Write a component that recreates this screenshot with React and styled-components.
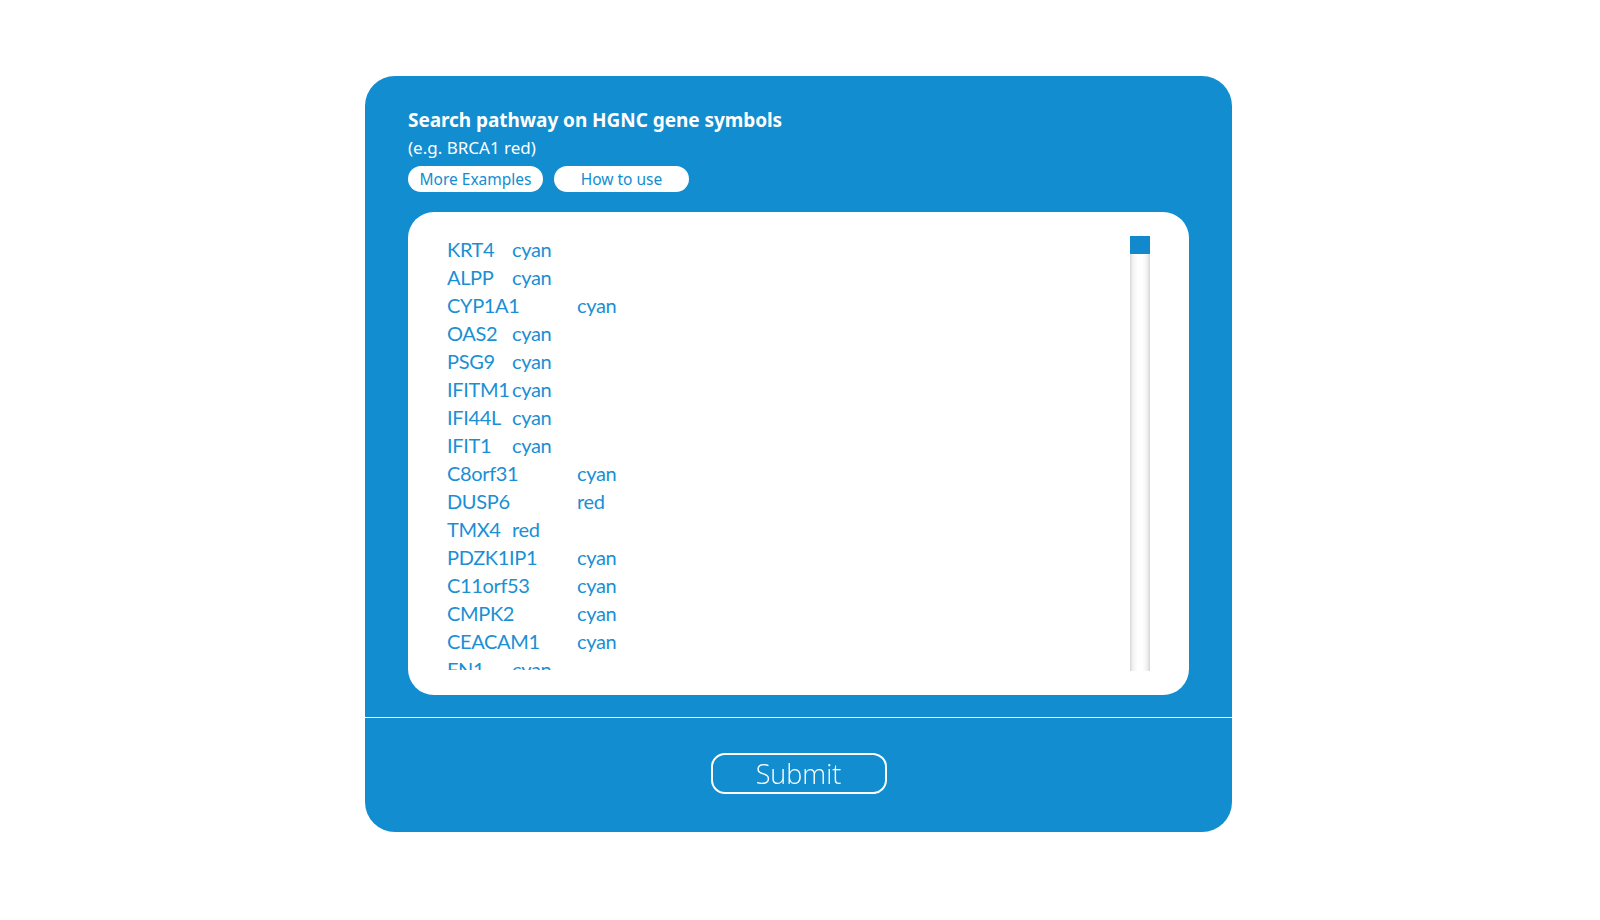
import React from "react";
import styled, { createGlobalStyle } from "styled-components";

const BLUE = "#128dcf";

const GlobalStyle = createGlobalStyle`
  html, body { margin: 0; padding: 0; background: #ffffff; }
  body { font-family: "Noto Sans", "Open Sans", sans-serif; }
  * { box-sizing: border-box; }
`;

const Page = styled.div`
  display: flex;
  justify-content: center;
  padding: 76px 3px 0 0;
`;

const Panel = styled.form`
  width: 867px;
  background: ${BLUE};
  border-radius: 30px;
  display: flex;
  flex-direction: column;
  margin: 0;
`;

const Header = styled.div`
  padding: 30px 43px 22px 43px;
  border-bottom: 1px solid #ffffff;
  display: flex;
  flex-direction: column;
`;

const Title = styled.h2`
  margin: 0;
  font-family: "Noto Sans", sans-serif;
  font-weight: 700;
  font-size: 19px;
  line-height: 28px;
  color: #ffffff;
  letter-spacing: -0.05px;
`;

const Hint = styled.p`
  margin: 0;
  font-family: "Noto Sans", sans-serif;
  font-size: 17px;
  line-height: 27px;
  color: #ffffff;
`;

const LinkRow = styled.div`
  display: flex;
  gap: 11px;
  margin-top: 5px;
`;

const PillButton = styled.button`
  width: 135px;
  height: 26px;
  border: none;
  border-radius: 13px;
  background: #ffffff;
  color: ${BLUE};
  font-family: "Noto Sans", sans-serif;
  font-size: 15.5px;
  line-height: 26px;
  padding: 0;
  cursor: pointer;
`;

const EditorCard = styled.div`
  margin-top: 20px;
  height: 483px;
  background: #ffffff;
  border-radius: 26px;
  padding: 23px 38px 25px 22px;
  display: flex;
  align-items: flex-start;
`;

const GeneInput = styled.textarea`
  width: 700px;
  height: 435px;
  border: none;
  outline: none;
  resize: none;
  margin: 0;
  padding: 0 0 0 17px;
  font-family: "Lato", sans-serif;
  font-weight: 400;
  font-size: 20px;
  letter-spacing: -0.35px;
  line-height: 28px;
  color: #1a8fd4;
  white-space: pre;
  tab-size: 65px;
  -moz-tab-size: 65px;
  overflow-x: hidden;
  overflow-y: scroll;
  scrollbar-width: none;
  background: #ffffff;

  &::-webkit-scrollbar {
    display: none;
  }
`;

const ScrollTrack = styled.div`
  width: 20px;
  height: 435px;
  margin-top: 1px;
  flex: none;
  background: linear-gradient(
    to right,
    #d8d8d8 0%,
    #f3f3f3 15%,
    #ffffff 40%,
    #ffffff 62%,
    #f1f1f1 85%,
    #d5d5d5 100%
  );
  display: flex;
  flex-direction: column;
`;

const ScrollThumb = styled.div`
  height: 18px;
  background: #1289cd;
`;

const Footer = styled.div`
  height: 114px;
  display: flex;
  align-items: center;
  justify-content: center;
  padding-bottom: 4px;
`;

const SubmitButton = styled.button`
  width: 176px;
  height: 41px;
  border: 2px solid #ffffff;
  border-radius: 14px;
  background: transparent;
  color: #ffffff;
  font-family: "Open Sans", sans-serif;
  font-weight: 300;
  font-size: 27px;
  line-height: 35px;
  padding: 0;
  cursor: pointer;
`;

const visible = [
  ["KRT4", "cyan"],
  ["ALPP", "cyan"],
  ["CYP1A1", "cyan"],
  ["OAS2", "cyan"],
  ["PSG9", "cyan"],
  ["IFITM1", "cyan"],
  ["IFI44L", "cyan"],
  ["IFIT1", "cyan"],
  ["C8orf31", "cyan"],
  ["DUSP6", "red"],
  ["TMX4", "red"],
  ["PDZK1IP1", "cyan"],
  ["C11orf53", "cyan"],
  ["CMPK2", "cyan"],
  ["CEACAM1", "cyan"],
  ["FN1", "cyan"],
];

const more = [
  "MX1", "ISG15", "RSAD2", "IFI27", "IFI6", "OAS1", "OAS3", "OASL", "HERC5", "IFIT3",
  "IFIT2", "XAF1", "EPSTI1", "STAT1", "IRF7", "BST2", "SAMD9L", "PARP9", "DDX58", "IFIH1",
  "USP18", "LY6E", "SPATS2L", "TRIM22", "PLSCR1", "GBP1", "SP110", "EIF2AK2", "LAMP3", "SIGLEC1",
  "DDX60", "HELZ2", "RTP4", "ZBP1", "CXCL10", "TNFSF10", "IFI35", "PSMB9", "TAP1", "UBE2L6",
];

const buildText = () => {
  const lines = visible.map(([g, c]) => `${g}\t${c}`);
  let i = 0;
  while (lines.length < 375) {
    const g = more[i % more.length];
    lines.push(`${g}\t${i % 3 === 0 ? "red" : "cyan"}`);
    i += 1;
  }
  return lines.join("\n");
};

export default function App() {
  const text = React.useMemo(buildText, []);
  return (
    <>
      <GlobalStyle />
      <Page>
        <Panel onSubmit={(e) => e.preventDefault()}>
          <Header>
            <Title>Search pathway on HGNC gene symbols</Title>
            <Hint>(e.g. BRCA1 red)</Hint>
            <LinkRow>
              <PillButton type="button">More Examples</PillButton>
              <PillButton type="button">How to use</PillButton>
            </LinkRow>
            <EditorCard>
              <GeneInput defaultValue={text} spellCheck={false} />
              <ScrollTrack aria-hidden="true">
                <ScrollThumb />
              </ScrollTrack>
            </EditorCard>
          </Header>
          <Footer>
            <SubmitButton type="submit">Submit</SubmitButton>
          </Footer>
        </Panel>
      </Page>
    </>
  );
}
